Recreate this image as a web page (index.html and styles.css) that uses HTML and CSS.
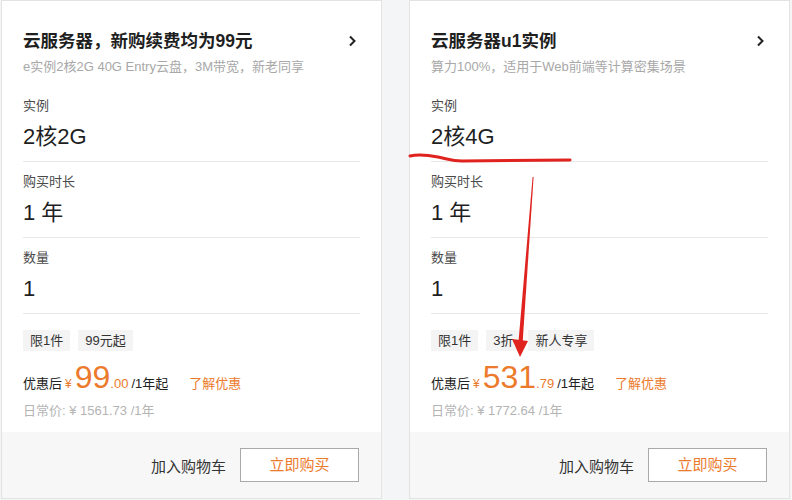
FILE: index.html
```html
<!DOCTYPE html>
<html lang="zh-CN">
<head>
<meta charset="utf-8">
<title>云服务器</title>
<link rel="stylesheet" href="styles.css">
</head>
<body>
<div class="page">
  <div class="card">
    <div class="card-body">
      <div class="head">
        <div class="title">云服务器，新购续费均为99元</div>
        <svg class="chev" width="10" height="14" viewBox="0 0 10 14"><polyline points="3,2.5 7.5,7 3,11.5" fill="none" stroke="#222" stroke-width="2"/></svg>
      </div>
      <div class="sub">e实例2核2G 40G Entry云盘，3M带宽，新老同享</div>
      <div class="spec">
        <div class="spec-label">实例</div>
        <div class="spec-value">2核2G</div>
      </div>
      <div class="spec">
        <div class="spec-label">购买时长</div>
        <div class="spec-value">1 年</div>
      </div>
      <div class="spec">
        <div class="spec-label">数量</div>
        <div class="spec-value">1</div>
      </div>
      <div class="tags">
        <span class="tag">限1件</span>
        <span class="tag">99元起</span>
      </div>
      <div class="price">
        <span class="price-pre">优惠后</span>
        <span class="yen">¥</span>
        <span class="big">99</span>
        <span class="dec">.00</span>
        <span class="unit">/1年起</span>
        <a class="more">了解优惠</a>
      </div>
      <div class="orig">日常价: ¥ 1561.73 /1年</div>
    </div>
    <div class="foot">
      <span class="cart">加入购物车</span>
      <span class="buy">立即购买</span>
    </div>
  </div>

  <div class="card">
    <div class="card-body">
      <div class="head">
        <div class="title">云服务器u1实例</div>
        <svg class="chev" width="10" height="14" viewBox="0 0 10 14"><polyline points="3,2.5 7.5,7 3,11.5" fill="none" stroke="#222" stroke-width="2"/></svg>
      </div>
      <div class="sub">算力100%，适用于Web前端等计算密集场景</div>
      <div class="spec">
        <div class="spec-label">实例</div>
        <div class="spec-value">2核4G</div>
      </div>
      <div class="spec">
        <div class="spec-label">购买时长</div>
        <div class="spec-value">1 年</div>
      </div>
      <div class="spec">
        <div class="spec-label">数量</div>
        <div class="spec-value">1</div>
      </div>
      <div class="tags">
        <span class="tag">限1件</span>
        <span class="tag">3折</span>
        <span class="tag">新人专享</span>
      </div>
      <div class="price">
        <span class="price-pre">优惠后</span>
        <span class="yen">¥</span>
        <span class="big">531</span>
        <span class="dec">.79</span>
        <span class="unit">/1年起</span>
        <a class="more">了解优惠</a>
      </div>
      <div class="orig">日常价: ¥ 1772.64 /1年</div>
    </div>
    <div class="foot">
      <span class="cart">加入购物车</span>
      <span class="buy">立即购买</span>
    </div>
  </div>

  <!-- red pen marks drawn over the second card -->
  <svg class="marks" width="792" height="500" viewBox="0 0 792 500">
    <path d="M410 156 C418 154 428 155 438 157 C448 159 452 161 462 161 L570 160" fill="none" stroke="#e0231f" stroke-width="3" stroke-linecap="round"/>
    <polygon points="532.6,177 533.6,177 522.6,343 518.4,343" fill="#e0231f"/>
    <polygon points="512,339 528,341 520,357" fill="#e0231f"/>
  </svg>
</div>
</body>
</html>
```

FILE: styles.css
```css
* { box-sizing: border-box; }

html, body {
  margin: 0;
  padding: 0;
  background: #f4f5f7;
}

body {
  font-family: "Liberation Sans", "Noto Sans CJK SC", Arial, sans-serif;
  color: #222;
}

.page {
  position: relative;
  display: flex;
  gap: 27px;
  padding-left: 1px;
  width: 792px;
  height: 500px;
}

.card {
  width: 381px;
  height: 499px;
  background: #fff;
  border: 1px solid #e3e3e3;
  display: flex;
  flex-direction: column;
}

.card-body {
  flex: 1;
  padding: 28px 21px 0 21px;
}

.head {
  display: flex;
  align-items: center;
  justify-content: space-between;
  height: 24px;
}

.title {
  font-size: 17.5px;
  font-weight: bold;
  line-height: 24px;
  color: #1f1f1f;
}

.chev {
  margin-right: 3px;
}

.sub {
  margin-top: 5px;
  height: 18px;
  font-size: 13px;
  line-height: 18px;
  color: #a8a8a8;
}

.spec {
  padding: 11px 0 9px;
  border-bottom: 1px solid #e8e8e8;
}

.sub + .spec {
  margin-top: 10px;
}

.spec-label {
  height: 18px;
  font-size: 13px;
  line-height: 18px;
  color: #4a4a4a;
}

.spec-value {
  margin-top: 7px;
  height: 30px;
  font-size: 22px;
  line-height: 30px;
  color: #1f1f1f;
}

.tags {
  display: flex;
  gap: 8px;
  margin-top: 16px;
}

.tag {
  background: #f4f4f4;
  padding: 0 7px;
  height: 21px;
  line-height: 21px;
  font-size: 13px;
  color: #333;
}

.price {
  display: flex;
  align-items: baseline;
  margin-top: 8px;
  height: 36px;
  line-height: 36px;
  font-size: 13px;
}

.price-pre {
  color: #222;
}

.yen {
  color: #ec7a2c;
  margin-left: 3px;
  font-size: 12px;
}

.big {
  color: #ec7a2c;
  font-size: 32px;
  margin-left: 3px;
}

.dec {
  color: #ec7a2c;
  font-size: 13px;
}

.unit {
  margin-left: 3px;
  color: #222;
}

.more {
  margin-left: 21px;
  color: #ec7a2c;
}

.orig {
  margin-top: 7px;
  height: 18px;
  font-size: 13px;
  line-height: 18px;
  color: #b4b4b4;
}

.foot {
  height: 66px;
  background: #f7f7f7;
  display: flex;
  align-items: center;
  justify-content: flex-end;
  padding-right: 22px;
  gap: 14px;
}

.cart {
  font-size: 15px;
  color: #333;
}

.buy {
  width: 119px;
  height: 34px;
  border: 1px solid #a9a9a9;
  background: #fff;
  color: #ec7a2c;
  font-size: 15px;
  line-height: 32px;
  text-align: center;
}

.marks {
  position: absolute;
  top: 0;
  left: 0;
  pointer-events: none;
}
```
